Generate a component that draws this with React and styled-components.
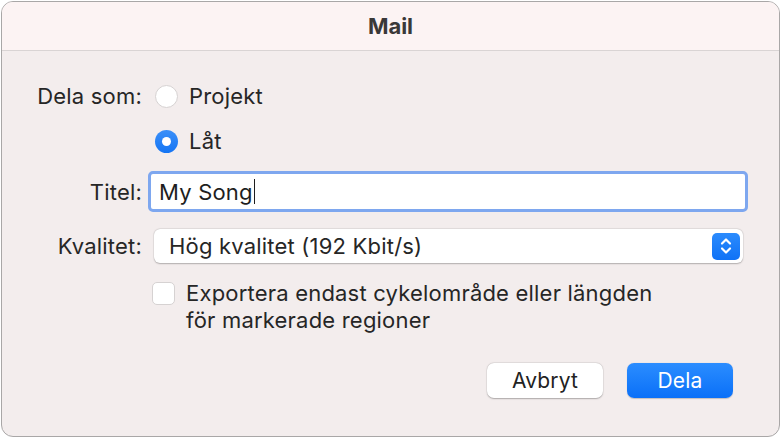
import React from 'react'
import styled, { createGlobalStyle } from 'styled-components'

const GlobalStyle = createGlobalStyle`
  html, body {
    margin: 0;
    padding: 0;
    background: #ffffff;
  }
  body {
    font-family: Inter, "Noto Sans", "Liberation Sans", sans-serif;
    color: #262626;
    letter-spacing: 0.2px;
  }
`

const Window = styled.div`
  box-sizing: border-box;
  width: 779px;
  height: 436px;
  margin: 1px 0 0 1px;
  border: 1px solid #a9a7a7;
  border-radius: 12px;
  overflow: hidden;
  background: #f3eded;
  display: flex;
  flex-direction: column;
`

const TitleBar = styled.div`
  height: 48px;
  flex: none;
  background: #fcf3f3;
  border-bottom: 1px solid #d9d4d4;
  display: flex;
  align-items: center;
  justify-content: center;
  font-size: 22px;
  font-weight: 700;
  color: #3a3838;
  letter-spacing: 0;
`

const Body = styled.div`
  flex: 1;
  display: flex;
  flex-direction: column;
  padding: 33px 0 0 0;
`

const Row = styled.div`
  display: grid;
  grid-template-columns: 140px 1fr;
  column-gap: ${p => p.$gap ?? 15}px;
  align-items: ${p => p.$align || 'center'};
  margin-top: ${p => p.$top || 0}px;
  height: ${p => p.$h || 24}px;
  line-height: 24px;
`

const Label = styled.div`
  text-align: right;
  font-size: 22px;
`

const Option = styled.label`
  display: flex;
  align-items: center;
  gap: 11px;
  margin-left: -2px;
  font-size: 22px;
`

const Radio = styled.span`
  box-sizing: border-box;
  width: 23px;
  height: 23px;
  border-radius: 50%;
  flex: none;
  display: flex;
  align-items: center;
  justify-content: center;
  background: ${p => (p.$on ? 'linear-gradient(#3a8ff8, #1575f4)' : '#ffffff')};
  border: ${p => (p.$on ? 'none' : '1px solid #d6d2d2')};
  &::after {
    content: '';
    display: ${p => (p.$on ? 'block' : 'none')};
    width: 9px;
    height: 9px;
    border-radius: 50%;
    background: #ffffff;
  }
`

const InputRing = styled.div`
  box-sizing: border-box;
  width: 600px;
  height: 41px;
  margin-left: -10px;
  border: 3px solid #7ea7ef;
  border-radius: 5px;
  padding: 1px;
  background: #ffffff;
  display: flex;
  align-items: center;
`

const Input = styled.div`
  flex: 1;
  padding-left: 7px;
  font-size: 22px;
  display: flex;
  align-items: center;
  color: #1e1e1e;
`

const Caret = styled.span`
  width: 1.5px;
  height: 25px;
  background: #1e1e1e;
  margin-left: 1px;
`

const Select = styled.div`
  box-sizing: border-box;
  width: 589px;
  height: 34px;
  margin-left: -3px;
  background: #ffffff;
  border-radius: 6px;
  box-shadow: 0 0.5px 1.5px rgba(0, 0, 0, 0.25), 0 0 0 0.5px rgba(0, 0, 0, 0.06);
  display: flex;
  align-items: center;
  justify-content: space-between;
  padding: 0 3px 0 15px;
  font-size: 22px;
`

const Stepper = styled.span`
  width: 28px;
  height: 27px;
  border-radius: 5px;
  background: linear-gradient(#2b8bfd, #0f72f6);
  display: flex;
  align-items: center;
  justify-content: center;
`

const Check = styled.span`
  box-sizing: border-box;
  width: 23px;
  height: 23px;
  flex: none;
  border-radius: 5px;
  background: #ffffff;
  border: 1px solid #d6d2d2;
`

const CheckRow = styled.div`
  display: flex;
  align-items: flex-start;
  gap: 11px;
  margin-left: -5px;
  font-size: 22px;
  line-height: 27px;
`

const CheckText = styled.div`
  margin-top: -2px;
`

const Footer = styled.div`
  display: flex;
  justify-content: flex-end;
  gap: 24px;
  margin-top: 27px;
  padding-right: 46px;
`

const Button = styled.button`
  box-sizing: border-box;
  height: 35px;
  width: ${p => p.$w}px;
  border: none;
  border-radius: 7px;
  font-family: inherit;
  font-size: 21px;
  letter-spacing: 0.2px;
  padding: 0;
  color: ${p => (p.$primary ? '#ffffff' : '#222222')};
  background: ${p => (p.$primary ? 'linear-gradient(#2b8dff, #0a70f8)' : '#ffffff')};
  box-shadow: ${p =>
    p.$primary
      ? '0 0.5px 1px rgba(0,0,0,0.2)'
      : '0 0.5px 1.5px rgba(0,0,0,0.28), 0 0 0 0.5px rgba(0,0,0,0.05)'};
`

export default function App() {
  return (
    <>
      <GlobalStyle />
      <Window>
        <TitleBar>Mail</TitleBar>
        <Body>
          <Row>
            <Label>Dela som:</Label>
            <Option>
              <Radio />
              Projekt
            </Option>
          </Row>
          <Row $top={21}>
            <span />
            <Option>
              <Radio $on />
              Låt
            </Option>
          </Row>
          <Row $top={18} $h={41} $gap={16}>
            <Label>Titel:</Label>
            <InputRing>
              <Input>
                My Song
                <Caret />
              </Input>
            </InputRing>
          </Row>
          <Row $top={17} $h={34} $gap={15}>
            <Label>Kvalitet:</Label>
            <Select>
              Hög kvalitet (192 Kbit/s)
              <Stepper>
                <svg width="14" height="20" viewBox="0 0 14 20" fill="none">
                  <path d="M3 7.5 L7 3.5 L11 7.5" stroke="#fff" strokeWidth="2.2" strokeLinecap="round" strokeLinejoin="round" />
                  <path d="M3 12.5 L7 16.5 L11 12.5" stroke="#fff" strokeWidth="2.2" strokeLinecap="round" strokeLinejoin="round" />
                </svg>
              </Stepper>
            </Select>
          </Row>
          <Row $top={19} $h={54} $align="start">
            <span />
            <CheckRow>
              <Check />
              <CheckText>
                Exportera endast cykelområde eller längden
                <br />
                för markerade regioner
              </CheckText>
            </CheckRow>
          </Row>
          <Footer>
            <Button $w={116}>Avbryt</Button>
            <Button $w={106} $primary>Dela</Button>
          </Footer>
        </Body>
      </Window>
    </>
  )
}
